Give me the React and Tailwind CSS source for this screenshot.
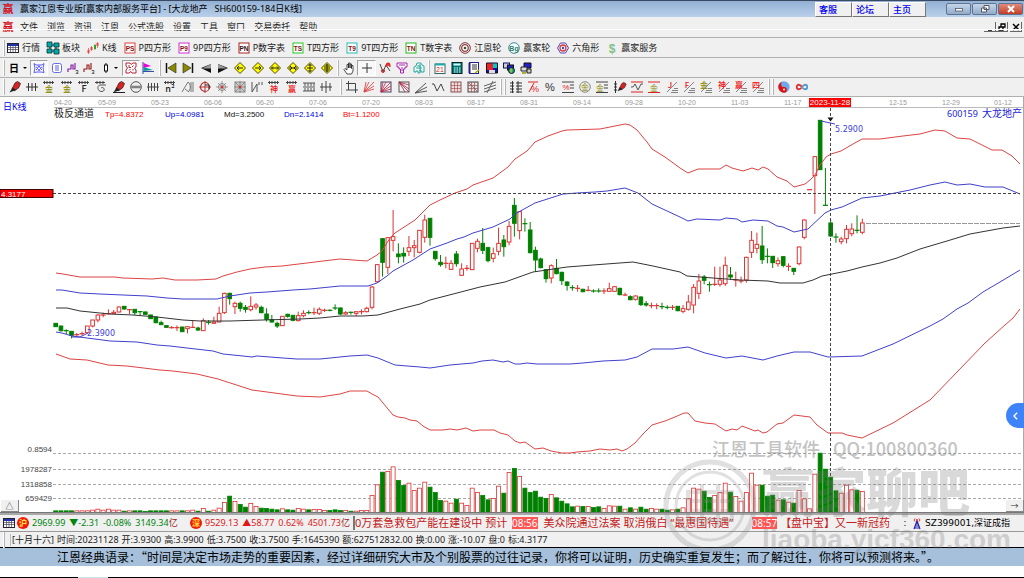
import { Fragment } from 'react';

const CJK = "font-['Noto_Sans','Noto_Sans_CJK_SC',sans-serif]";

const menus = ['文件', '浏览', '资讯', '江恩', '公式选股', '设置', '工具', '窗口', '交易委托', '帮助'];

// ---------- icons, all on a 12x12 grid ----------
const BoxIcon = ({ text, color, ink = '#811' }) => (
    <>
        <rect x="1" y="1" width="10" height="10" fill="#fff" stroke={color} />
        <text x="6" y="8.5" fontSize="6.5" fontWeight="bold" textAnchor="middle" fill={ink} fontFamily="Liberation Sans, sans-serif">{text}</text>
    </>
);

const Diamond = ({ d }) => (
    <>
        <path d="M6 .5 11.5 6 6 11.5 .5 6Z" fill="#ffff00" stroke="#554400" />
        <path d={d} stroke="#222" fill="none" />
    </>
);

const Comb = ({ text, color = '#222', size = 8 }) => (
    <>
        <path d="M0 1.500h11M1.500 0v3M4 0v3M7 0v3M9.500 0v3" stroke="#444" fill="none" />
        <text x="6" y="11" fontSize={size} fontWeight="500" textAnchor="middle" fill={color} fontFamily="Noto Sans CJK SC, sans-serif">{text}</text>
    </>
);

const Slope = ({ text, color }) => (
    <>
        <path d="M1 11 11 1M5 11.500h7M6 9.500h6M8 7.500h4" stroke="#666" fill="none" strokeWidth=".8" />
        <text x="4" y="7" fontSize="8" fontWeight="500" textAnchor="middle" fill={color} fontFamily="Noto Sans CJK SC, sans-serif">{text}</text>
    </>
);

const Pen = () => (
    <>
        <path d="M3 8 6 2 8.500 .5l3 2L9.500 7 5 10Z" fill="#d22" stroke="#222" strokeWidth=".8" />
        <path d="M.5 11.500 3.500 6.500 7 9Z" fill="#222" />
    </>
);

const Rays = ({ color, back }) => (
    <>
        {back && <rect x="1" y="1" width="10" height="10" fill="none" stroke="#446" />}
        <path d="M1 11 3 1M1 11 6 1M1 11 11 1M1 11 11 5M1 11 11 8" stroke={color} fill="none" strokeWidth=".8" />
    </>
);

const icons = {
    sheet: <><rect x=".5" y="1.5" width="11" height="9" fill="#fff" stroke="#223" /><path d="M1 3h10" stroke="#2233aa" strokeWidth="2" /><path d="M1 5.5h10M1 7.5h10M3.5 4v6M6 4v6M8.500 4v6" stroke="#445" strokeWidth=".7" /></>,
    blocks: <><path d="M3 3h6v6H3Z" fill="none" stroke="#111" /><path d="M0 0h5v5H0ZM7 1h5v4H7ZM0 7h5v4H0ZM7 7h5v5H7Z" fill="#0aa" stroke="#033" strokeWidth=".8" /></>,
    kline: <><path d="M1.500 6v6M4.500 4v5M8 2v6M10.500 0v6" stroke="#c33" strokeWidth=".6" /><path d="M.5 8h2v3h-2ZM3.500 5h2v3h-2Z" fill="#e44" /><path d="M7 3h2v4H7Z" fill="#2a2" /><path d="M9.500 1h2v3h-2Z" fill="#e44" /></>,
    ps: <BoxIcon text="PS" color="#d44" />,
    p9: <BoxIcon text="P9" color="#c3c" />,
    pn: <BoxIcon text="PN" color="#a22" ink="#311" />,
    ts: <BoxIcon text="TS" color="#2c2" />,
    t9: <BoxIcon text="T9" color="#2bb" />,
    tn: <BoxIcon text="TN" color="#2b2" />,
    wheel: <><circle cx="6" cy="6" r="5.300" fill="#fff" stroke="#733" /><circle cx="6" cy="6" r="3.300" fill="none" stroke="#944" strokeWidth="1.300" /><circle cx="6" cy="6" r="1.300" fill="#353" /></>,
    big: <><circle cx="6" cy="6" r="5.300" fill="#eff" stroke="#489" /><text x="6" y="8.500" fontSize="7" fontWeight="bold" textAnchor="middle" fill="#387a6a" fontFamily="Liberation Sans, sans-serif">Bg</text></>,
    hex: <><path d="M3.500 1h5L11.500 6l-3 5h-5L.5 6Z" fill="#fff" stroke="#44b" /><circle cx="6" cy="6" r="3" fill="none" stroke="#d33" strokeWidth="1.300" /><circle cx="6" cy="6" r="1.200" fill="#44b" /></>,
    dollar: <text x="6" y="10.500" fontSize="12" fontWeight="bold" textAnchor="middle" fill="#7fc08a" fontFamily="Liberation Sans, sans-serif">$</text>,
    web: <><path d="M1 1.500 3 3h6l2-1.500L10 6l1 4.500L8 10H4l-3 .5L2 6Z" fill="#fff" stroke="#33e" strokeWidth=".8" /><path d="M3 5l2 1-2 2M9 5 7 6l2 2M5 3.500l1 2 1-2M5 9l1-2 1 2" stroke="#33e" fill="none" strokeWidth=".8" /></>,
    book: <><rect x="1.500" y="1.500" width="9" height="9" rx="2" fill="#fff" stroke="#66e" /><path d="M4 4h4M4 6h4M4 8h4" stroke="#33e" strokeWidth=".8" /></>,
    stepA: <><path d="M1 10V7h3V3h2v4h2V1" stroke="#82a" fill="none" strokeWidth="1.200" /><text x="10" y="11.500" fontSize="6" textAnchor="middle" fontFamily="Liberation Sans, sans-serif">3</text></>,
    stepB: <><path d="M1 10V7h3V3h2v4h2V1" stroke="#922" fill="none" strokeWidth="1.200" /><text x="10" y="11.500" fontSize="6" textAnchor="middle" fontFamily="Liberation Sans, sans-serif">3</text></>,
    bar: <><path d="M6 1v10" stroke="#111" /><rect x="4.500" y="3" width="3" height="6" fill="#fff" stroke="#111" /></>,
    maze: <><path d="M1 1h4l1 1.500L8 1h3v4L9.500 6 11 8v3H7L6 9.500 4 11H1V8l1.500-2L1 4Z" fill="#fff" stroke="#a12" strokeWidth=".9" /><path d="M4 3v2.500h2M8.500 3.500 7 5M4 8.500 5.500 7M8 8.500V7" stroke="#a12" fill="none" strokeWidth=".9" /></>,
    flag: <><path d="M1 0v12M1 9.500h11" stroke="#44a" /><path d="M1.500 1 9 4 1.500 6Z" fill="#e0d" /><path d="M1.500 5 11 8 1.500 9Z" fill="#0a9a9a" /></>,
    first: <><path d="M1.500 1v10" stroke="#111" strokeWidth="1.500" /><path d="M11 1v10L3 6Z" fill="#8a8a00" stroke="#222" strokeWidth=".6" /></>,
    last: <><path d="M10.500 1v10" stroke="#111" strokeWidth="1.500" /><path d="M1 1v10L9 6Z" fill="#8a8a00" stroke="#222" strokeWidth=".6" /></>,
    prev: <><path d="M11 2v9L1 6Z" fill="#111" /><path d="M11 2v4.500H2Z" fill="#999" /></>,
    next: <><path d="M1 2v9L11 6Z" fill="#111" /><path d="M1 2v4.500h9Z" fill="#999" /></>,
    d1: <Diamond d="M3 6h6M5 4 3 6l2 2" />,
    d2: <Diamond d="M3 6h6M7 4l2 2-2 2" />,
    d3: <Diamond d="M2.500 6h7M4 4.500 2.500 6 4 7.500M8 4.500 9.500 6 8 7.500" />,
    d4: <Diamond d="M2 6h8M3 4l2 2-2 2M9 4 7 6l2 2" />,
    d5: <Diamond d="M6 2v8M3 6h6M4.500 4 6 2.500 7.500 4M4.500 8 6 9.500 7.500 8" />,
    d6: <Diamond d="M6 2v8M3 5h6M3 7h6M4.500 4 6 2.500 7.500 4M4.500 8 6 9.500 7.500 8" />,
    hand: <path d="M4 12 1 7.500l1-1L4 8V2.500h1.500V6 1h1.500v5V2h1.500v4.500V3.500H10V9l-1.500 3Z" fill="#fff" stroke="#222" strokeWidth=".8" />,
    cross: <path d="M6 1v10M1 6h10" stroke="#333" />,
    wave: <><path d="M1 2 4 10 7 3l4 6" stroke="#444" fill="none" /><circle cx="4" cy="9" r="1.500" fill="none" stroke="#d22" /><path d="M7 5c0-5 4-5 4 0M7 3h4" stroke="#d22" fill="none" strokeWidth="1.300" /></>,
    tee: <path d="M1 1h10v4H9v2H7.500v4h-3V7H3V5H1ZM3 3h6M6 5v4" fill="#fff" stroke="#a2a" />,
    tee2: <path d="M4 1h4l1 2 2 1v6H8V8H7v3H5V9H3v1H1V5l2-1ZM4 4h4M3 6h6M7 2v7" fill="#efe" stroke="#1a9a9a" strokeWidth=".9" />,
    cal: <><rect x="1" y="2" width="10" height="9.500" fill="#fff" stroke="#366" /><path d="M1 2.500h10" stroke="#2aa" strokeWidth="2" /><text x="6" y="10" fontSize="7" textAnchor="middle" fill="#d22" fontFamily="Liberation Sans, sans-serif">21</text></>,
    calc: <><rect x="1" y=".5" width="10" height="11" fill="#077" stroke="#022" /><path d="M2.500 2.500h7" stroke="#cff" strokeWidth="2" /><path d="M3 6h1.500M5.500 6H7M8 6h1.500M3 8h1.500M5.500 8H7M8 8h1.500M3 10h1.500M5.500 10H7M8 10h1.500" stroke="#eff" /></>,
    note: <><rect x="1.500" y=".5" width="9" height="11" fill="#fff" stroke="#228" /><path d="M1.500 1v10" stroke="#228" strokeWidth="2" /><path d="M4 3h5M4 5h5M4 7h5" stroke="#333" /><path d="m7 11 4-3" stroke="#aa0" strokeWidth="1.500" /></>,
    disk: <><path d="M.5 1h11v10H.5Z" fill="#11a" stroke="#111" /><path d="M1 1.500h6V8H1Z" fill="#e22" /><path d="M7 1.500h4V6H7Z" fill="#0cc" /><path d="M3 8h6v3H3Z" fill="#ddd" /></>,
    net: <><rect x=".5" y="1" width="6" height="5" fill="#ccd" stroke="#116" /><rect x="4.500" y="3" width="6" height="5" fill="#22c" stroke="#111" /><circle cx="8.500" cy="8.500" r="3" fill="#2a6" stroke="#113" /><path d="M8 6.500v4" stroke="#dd4" /></>,
    pcs: <><path d="M4 1h7v5H4Z" fill="#22c" stroke="#111" /><path d="M1 5h6v4H1Z" fill="#ddd" stroke="#222" /><path d="M7 7h4v4H7Z" fill="#ccc" stroke="#222" /><path d="M2 11h4" stroke="#990" strokeWidth="1.500" /></>,
    pen: <Pen />,
    ticks: <path d="M0 6h12M2.500 2v8M6 2v8M9.500 2v8" stroke="#333" />,
    gold: <Comb text="金" color="#8a8a00" />,
    f: <Comb text="F" size={9} />,
    spiral: <><path d="M0 1.500h10M2 0v3M5 0v3M8 0v3" stroke="#444" /><path d="M11 4H5C1 5 3 11 7 10.500 11 10 9 5 6 7" stroke="#555" fill="none" /></>,
    penLine: <><Pen /><path d="M0 11.500h12" stroke="#222" /></>,
    ring: <><circle cx="6" cy="6" r="5.300" fill="none" stroke="#555" /><path d="M1 6h10M3 4.500v3M5 4.500v3M7 4.500v3M9 4.500v3" stroke="#444" strokeWidth=".8" /></>,
    ticks4: <path d="M0 6h12M1.500 2v8M4.500 2v8M7.500 2v8M10.500 2v8" stroke="#444" />,
    n2: <Comb text="n²" size={9} />,
    fan: <path d="M0 11 6 1c3 2 3 8 0 10M3 8l4 3M9 1v10M11 1v10" stroke="#777" fill="none" />,
    target: <><circle cx="6" cy="6" r="4.500" fill="none" stroke="#a33" strokeWidth="1.200" /><path d="M6 0v12M0 6h12" stroke="#b33" /><path d="M6 4h4v4" stroke="#333" fill="none" /></>,
    star: <><path d="M6 0v12M0 6h12M2 2l8 8M10 2l-8 8" stroke="#888" strokeWidth=".8" /><circle cx="6" cy="6" r="3.500" fill="none" stroke="#888" /><circle cx="6" cy="6" r="1.500" fill="#c33" /></>,
    starBox: <><rect x="1" y="1" width="10" height="10" fill="#ccc" stroke="#888" /><path d="M6 0v12M0 6h12M1 1l10 10M11 1 1 11" stroke="#777" strokeWidth=".7" /><circle cx="6" cy="6" r="1.500" fill="#c33" /></>,
    slashN: <path d="M1 1v10M1 11 6 3v8M8 1v3M11 1v3" stroke="#555" fill="none" />,
    shen: <Comb text="神" color="#e11" />,
    ying: <Comb text="赢" color="#e11" />,
    rows: <path d="M0 2h12M0 10h12M2 2v3M5 2v3M8 2v3M11 2v3M2 7v3M5 7v3M8 7v3M11 7v3M0 6h12" stroke="#444" strokeWidth=".9" />,
    split: <path d="M0 6h12M2 2v8M6 0v12M10 2v8" stroke="#333" strokeWidth=".9" />,
    frame: <path d="M2.500 0v9H12M0 2.500h9.500V12M2.500 9H0" stroke="#444" fill="none" />,
    raysR: <Rays color="#d33" />,
    raysBox: <Rays color="#b24" back />,
    raysDown: <><rect x="1" y="1" width="10" height="10" fill="none" stroke="#555" /><path d="M1 1l10 3M1 1l10 7M1 1l10 10M1 1l6 10" stroke="#a24" strokeWidth=".8" /></>,
    fanK: <path d="M0 12 11 2M0 12 12 6M0 12l12-2" stroke="#555" />,
    zig: <path d="M0 3h2l3 7 4-7 3 7" stroke="#444" fill="none" />,
    grid: <><rect x="1" y="1" width="10" height="10" fill="#edd" stroke="#855" /><path d="M1 4.500h10M1 7.500h10M4.500 1v10M7.500 1v10" stroke="#a55" strokeWidth=".7" /></>,
    gridK: <><rect x="1" y="1" width="10" height="10" fill="#edd" stroke="#444" /><path d="M1 4.500h10M1 7.500h10M4.500 1v10M7.500 1v10M1 1l10 10" stroke="#855" strokeWidth=".7" /></>,
    para: <path d="M0 5 12 1M0 8l12-4M0 11l12-4M3 12 9 0" stroke="#555" strokeWidth=".9" />,
    ladder: <path d="M2.500 0v12M8 0v12M0 2h4M0 5h4M0 8h4M0 11h4M6 2h6M6 5h6M6 8h6M6 11h6" stroke="#333" />,
    pctR: <><path d="M1 1h10M2 11 7 2" stroke="#d22" /><text x="8" y="11" fontSize="9" textAnchor="middle" fill="#d22" fontFamily="Liberation Sans, sans-serif">%</text></>,
    pct: <text x="6" y="10" fontSize="11" textAnchor="middle" fill="#333" fontFamily="Liberation Sans, sans-serif">%</text>,
    pctL: <><path d="M0 1h12M8 4h4M8 7h4M0 11.500h12" stroke="#444" /><text x="4" y="9" fontSize="8" textAnchor="middle" fill="#d22" fontFamily="Liberation Sans, sans-serif">%</text></>,
    goldO: <><circle cx="6" cy="6" r="5.300" fill="#eee" stroke="#888" /><text x="6" y="9" fontSize="8" textAnchor="middle" fill="#8a8a00" fontFamily="Noto Sans CJK SC, sans-serif">金</text></>,
    goldL: <><path d="M0 1h12M8 4h4M8 7h4M0 11.500h12" stroke="#444" /><text x="4" y="10" fontSize="8" textAnchor="middle" fill="#8a8a00" fontFamily="Noto Sans CJK SC, sans-serif">金</text></>,
    penV: <><path d="M1.500 0v12M0 3h3M0 6h3M0 9h3" stroke="#333" /><g transform="translate(3 1) scale(.8)"><Pen /></g></>,
    chan: <><path d="M0 1h12M0 11h12" stroke="#d22" /><path d="M0 6h2l2-3 3 6 3-6h2" stroke="#555" fill="none" /></>,
    goldR: <><path d="M0 1h12M0 11.500h12" stroke="#d22" /><text x="6" y="9.500" fontSize="8" textAnchor="middle" fill="#8a8a00" fontFamily="Noto Sans CJK SC, sans-serif">金</text></>,
    sJ: <Slope text="J" color="#e11" />,
    sF: <Slope text="F" color="#e11" />,
    sG: <Slope text="金" color="#8a8a00" />,
    sS: <Slope text="神" color="#e11" />,
    sY: <Slope text="赢" color="#e11" />,
    s4: <Slope text="四" color="#e11" />,
    taiji: <><circle cx="6" cy="6" r="5.700" fill="#6fa8ea" /><path d="M6 .3A5.700 5.700 0 0 0 6 11.700 2.850 2.850 0 0 0 6 6 2.850 2.850 0 0 1 6 .3" fill="#d11" /><circle cx="6" cy="8.500" r="1" fill="#fff" /></>,
    loop: <><path d="M6 6C4 3 .8 3 .8 6S4 9 6 6" stroke="#d33" fill="none" strokeWidth="1.800" /><path d="M6 6c2-3 5.200-3 5.200 0S8 9 6 6" stroke="#59c" fill="none" strokeWidth="1.800" /></>,
    tower: <><path d="M6 4 3 12M6 4l3 8M4 9h4M3 11h6M5 7h2" stroke="#22a" fill="none" strokeWidth="1.200" /><path d="M4 1.500c-1 1-1 2 0 3M8 1.500c1 1 1 2 0 3" stroke="#d22" fill="none" /><circle cx="6" cy="3" r="1" fill="#d22" /></>,
};

const Icon = ({ name, className = 'size-3' }) => (
    <svg viewBox="0 0 12 12" className={`${className} shrink-0 overflow-visible`} aria-hidden="true">{icons[name]}</svg>
);

const shortcuts = [
    ['sheet', '行情'], ['blocks', '板块'], ['kline', 'K线'], ['ps', 'P四方形'], ['p9', '9P四方形'],
    ['pn', 'P数字表'], ['ts', 'T四方形'], ['t9', '9T四方形'], ['tn', 'T数字表'], ['wheel', '江恩轮'],
    ['big', '赢家轮'], ['hex', '六角形'], ['dollar', '赢家服务'],
];

const drawA = ['pen', 'ticks', 'gold', 'gold', 'f', 'spiral', 'penLine', 'ring', 'ticks4', 'n2', 'fan', 'target', 'star', 'starBox', 'slashN', 'shen', 'ying', 'rows', 'split'];
const drawB = ['frame', 'raysR', 'raysBox', 'raysDown', 'fanK', 'zig', 'grid', 'gridK', 'para'];
const drawC = ['ladder', 'pctR', 'pct', 'pctL', 'goldO', 'goldL', 'penV', 'chan', 'goldR', 'sJ', 'sF', 'sG', 'sS', 'sY', 's4'];

// ---------- chart data ----------
// [colour, high, body top, body bottom, low, volume], in thirds of a unit from each block's base
const blocks = [
    {
        base: 540,
        bars: [
            ['g', 430, 430, 440, 440, 5], ['g', 438, 438, 452, 455, 5], ['g', 448, 452, 452, 462, 5], ['g', 454, 454, 466, 475, 5],
            ['r', 459, 464, 464, 470, 5], ['r', 455, 461, 461, 467, 5], ['r', 438, 438, 458, 460, 5], ['r', 420, 420, 438, 442, 7],
            ['r', 403, 405, 420, 427, 10], ['r', 398, 405, 405, 412, 7], ['r', 388, 401, 401, 404, 10], ['r', 390, 397, 401, 402, 7],
            ['r', 379, 381, 396, 397, 7], ['g', 379, 379, 387, 389, 4], ['r', 388, 389, 389, 402, 5], ['g', 387, 388, 398, 405, 5],
            ['g', 393, 395, 395, 408, 5], ['g', 394, 396, 403, 404, 3], ['g', 404, 405, 416, 417, 5], ['g', 410, 411, 428, 430, 5],
            ['g', 422, 428, 434, 435, 5], ['g', 435, 437, 442, 444, 5], ['r', 438, 443, 443, 446, 5], ['r', 436, 443, 443, 453, 5],
            ['g', 441, 441, 455, 456, 5], ['r', 438, 440, 446, 460, 5], ['r', 422, 442, 442, 444, 7], ['g', 440, 444, 450, 453, 4],
            ['r', 415, 422, 452, 452, 12], ['g', 420, 427, 427, 434, 4], ['r', 410, 426, 430, 432, 7], ['r', 380, 400, 426, 427, 13],
            ['r', 338, 340, 398, 402, 30], ['g', 338, 340, 356, 374, 49], ['r', 365, 370, 380, 402, 33], ['g', 365, 370, 385, 395, 24],
            ['g', 375, 382, 388, 398, 16], ['r', 349, 379, 389, 394, 27], ['r', 369, 375, 381, 389, 18], ['g', 377, 382, 398, 400, 13],
            ['g', 385, 402, 418, 425, 12], ['g', 405, 419, 426, 428, 10], ['g', 425, 430, 438, 444, 8], ['r', 408, 409, 437, 438, 11],
            ['g', 401, 403, 409, 413, 8], ['g', 405, 406, 421, 424, 7], ['r', 395, 407, 422, 424, 12], ['r', 391, 400, 407, 412, 10],
            ['g', 391, 398, 398, 403, 8], ['r', 383, 398, 398, 405, 9], ['r', 382, 388, 400, 405, 9], ['r', 386, 391, 391, 396, 6],
            ['g', 388, 391, 391, 394, 6], ['g', 373, 384, 384, 390, 8], ['g', 382, 384, 402, 405, 6],
        ],
    },
    {
        base: 360,
        bars: [
            ['r', 573, 578, 582, 584, 6], ['g', 575, 577, 577, 584, 4], ['r', 574, 575, 580, 588, 4], ['r', 568, 575, 575, 583, 6],
            ['r', 560, 565, 575, 577, 6], ['r', 498, 501, 562, 568, 51], ['r', 432, 434, 485, 488, 83], ['g', 354, 356, 427, 470, 121],
            ['r', 351, 353, 442, 462, 123], ['r', 270, 350, 361, 394, 137], ['g', 370, 402, 410, 430, 96], ['g', 382, 400, 408, 428, 81],
            ['r', 348, 383, 394, 408, 88], ['r', 360, 377, 383, 412, 66], ['r', 330, 331, 397, 400, 73], ['r', 284, 300, 352, 368, 91],
            ['g', 294, 295, 352, 377, 76], ['g', 393, 394, 416, 422, 60], ['g', 405, 427, 434, 440, 36], ['r', 410, 430, 430, 445, 34],
            ['r', 420, 430, 448, 450, 28], ['g', 393, 402, 431, 440, 40], ['r', 430, 447, 466, 468, 28], ['r', 435, 445, 445, 452, 21],
            ['r', 369, 370, 449, 450, 73], ['r', 356, 364, 385, 397, 60], ['g', 324, 370, 391, 402, 51], ['g', 380, 383, 422, 427, 38],
            ['r', 383, 401, 415, 427, 42], ['r', 323, 370, 394, 406, 79], ['g', 345, 360, 380, 410, 58], ['r', 303, 319, 366, 376, 120],
            ['g', 234, 256, 310, 350, 132], ['r', 273, 275, 332, 358, 108], ['g', 295, 311, 311, 335, 73], ['g', 306, 330, 398, 400, 60],
            ['g', 380, 391, 420, 456, 64], ['g', 413, 417, 443, 445, 46], ['g', 448, 449, 476, 488, 42], ['r', 433, 437, 474, 490, 54],
            ['g', 417, 445, 461, 463, 44], ['g', 455, 457, 482, 495, 34], ['g', 484, 486, 496, 512, 26], ['g', 495, 503, 503, 512, 17],
            ['r', 495, 505, 505, 515, 19], ['g', 506, 508, 515, 517, 18], ['r', 498, 511, 511, 514, 18], ['g', 508, 513, 513, 518, 15],
            ['g', 505, 513, 513, 518, 17], ['r', 505, 513, 513, 522, 12], ['r', 488, 506, 514, 516, 20], ['r', 498, 500, 514, 516, 19],
            ['g', 503, 505, 524, 526, 19], ['r', 518, 525, 525, 528, 10], ['g', 526, 530, 539, 541, 14], ['r', 526, 528, 538, 542, 10],
            ['g', 529, 531, 554, 558, 16], ['g', 543, 551, 555, 560, 10], ['r', 548, 557, 557, 565, 12], ['r', 550, 557, 557, 568, 10],
            ['g', 548, 560, 560, 568, 10], ['g', 556, 562, 562, 568, 7], ['r', 555, 562, 562, 570, 8], ['g', 558, 559, 572, 574, 10],
        ],
    },
    {
        base: 300,
        bars: [
            ['r', 615, 626, 634, 640, 14], ['r', 585, 606, 628, 632, 41], ['r', 552, 562, 615, 640, 73], ['r', 522, 543, 580, 597, 70],
            ['g', 525, 531, 541, 553, 64], ['g', 545, 554, 554, 575, 45], ['r', 500, 553, 553, 558, 51], ['r', 500, 540, 553, 560, 60],
            ['r', 470, 496, 551, 558, 88], ['g', 501, 525, 531, 540, 61], ['r', 515, 540, 540, 560, 48], ['r', 530, 543, 543, 550, 34],
            ['r', 470, 472, 540, 548, 60], ['r', 393, 421, 457, 474, 118], ['r', 398, 433, 445, 460, 82], ['g', 378, 438, 479, 492, 82],
            ['g', 445, 469, 469, 490, 49], ['g', 468, 469, 488, 504, 52], ['r', 472, 482, 491, 500, 37], ['g', 468, 470, 496, 502, 38],
            ['r', 490, 499, 499, 513, 31], ['g', 504, 505, 514, 525, 28], ['r', 440, 441, 491, 496, 66], ['r', 358, 360, 412, 418, 41],
            ['r', 269, 269, 269, 269, 11], ['r', 168, 170, 227, 342, 115], ['g', 60, 61, 209, 210, 178], ['g', 204, 316, 316, 318, 130],
            ['g', 358, 369, 408, 410, 106], ['g', 400, 411, 411, 428, 65], ['r', 410, 417, 425, 433, 58], ['r', 375, 388, 416, 430, 82],
            ['r', 370, 387, 401, 409, 68], ['g', 346, 391, 391, 400, 67], ['r', 356, 369, 397, 403, 63],
        ],
    },
];

const bars = blocks.flatMap(({ base, bars }) =>
    bars.map(([color, high, top, bottom, low, volume]) => ({
        color: color === 'g' ? '#008000' : '#dc3232',
        up: color === 'r',
        high: (base + high) / 3,
        top: (base + top) / 3,
        bottom: (base + bottom) / 3,
        low: (base + low) / 3,
        volume: volume / 3,
    }))
);
const barX = (i) => 55.7 + i * 5.272;

const curves = [
    { color: '#dd4444', points: '56,273 63,274 80,277 115,277 123,278 152,279 163,278 175,280 197,280 216,279 223,276 237,272 250,269 265,267 282,266 307,263 323,261 340,259 353,260 367,261 377,255 382,251 390,238 395,233 415,220 430,205 440,200 455,193 467,189 473,185 493,178 508,167 515,159 527,151 535,142 548,136 562,131 567,130 600,129 625,124 630,125 637,130 647,142 652,149 665,157 680,168 688,173 698,169 720,169 726,165 732,168 743,171 752,168 758,170 763,167 768,169 777,177 787,181 794,187 805,184 810,180 815,175 820,165 826,157 831,154 841,151 853,144 862,139 880,139 903,136 920,134 935,130 945,131 957,138 970,139 982,145 992,150 1002,150 1012,156 1020,164' },
    { color: '#4040cc', points: '56,290 62,290 80,293 100,294 123,295 147,296 167,298 183,299 217,299 230,296 250,293 267,292 293,290 310,289 340,286 368,286 377,283 387,276 393,271 413,260 430,249 447,243 457,239 464,237 473,233 483,230 493,227 510,219 515,214 535,203 563,194 577,193 595,192 607,191 625,188 638,193 652,204 680,217 688,221 697,219 720,220 726,218 737,219 742,222 753,220 768,221 777,226 783,227 794,232 808,229 825,213 831,210 842,207 862,198 880,196 910,190 930,185 945,182 957,185 970,184 985,187 1003,187 1020,194' },
    { color: '#333333', points: '56,308 67,308 80,311 110,314 133,315 157,317 183,320 200,321 230,321 263,320 300,319 320,318 340,316 363,316 378,315 400,309 420,304 430,300 457,293 480,287 505,282 533,272 567,267 593,265 633,262 653,266 680,272 687,276 713,278 740,280 768,281 780,283 803,283 813,280 822,276 847,271 862,267 880,263 897,258 920,249 947,241 970,234 1003,228 1020,226' },
    { color: '#4040cc', points: '56,332 62,333 72,336 87,338 95,339 110,341 137,342 157,345 170,346 187,348 213,351 223,354 243,356 252,357 257,356 283,358 297,359 320,359 330,358 340,357 350,356 367,355 378,358 395,365 420,367 430,368 450,365 473,363 482,361 493,360 503,362 508,361 515,364 520,364 527,363 537,364 570,364 583,363 603,361 625,360 637,357 652,349 673,349 688,347 705,353 726,358 742,356 763,360 777,356 794,352 810,352 828,357 862,356 893,344 930,326 943,319 957,309 968,303 983,292 1000,282 1020,270' },
    { color: '#dd4444', points: '56,354 70,359 87,360 108,365 127,366 160,370 173,371 197,374 218,379 252,390 297,396 320,397 340,394 350,391 367,391 372,394 378,397 383,403 393,415 398,417 405,418 410,420 417,421 423,426 430,430 443,430 450,429 457,430 466,428 473,431 480,430 494,430 500,433 508,435 515,441 520,443 525,442 535,449 543,448 551,451 562,453 570,453 577,452 590,451 600,449 610,450 617,449 622,451 627,449 635,443 643,434 652,425 665,421 675,417 684,413 688,413 695,421 705,423 715,424 726,431 732,429 737,430 742,426 755,431 758,430 763,433 767,432 777,424 783,423 794,415 810,417 817,425 828,433 842,433 847,435 862,438 893,423 930,400 958,371 985,343 1005,325 1013,318 1020,309' },
];

const dates = [
    ['04-20', 54], ['05-09', 98], ['05-23', 151], ['06-06', 204], ['06-20', 256], ['07-06', 309], ['07-20', 362],
    ['08-03', 415], ['08-17', 467], ['08-31', 520], ['09-14', 573], ['09-28', 625], ['10-20', 678], ['11-03', 731],
    ['11-17', 784], ['12-15', 889], ['12-29', 942], ['01-12', 994],
];

const scale = [
    ['0.8594', 452, 453.5], ['1978287', 472, 469.5], ['1318858', 487, 484.5], ['659429', 501, 498.5],
];

const readouts = [
    ['Tp=4.8372', 105, '#ff0000'], ['Up=4.0981', 165, '#0000dd'], ['Md=3.2500', 224, '#111111'],
    ['Dn=2.1414', 284, '#0000dd'], ['Bt=1.1200', 343, '#ff0000'],
];

function Chart() {
    return (
        <svg viewBox="0 97 1024 415" className="block w-full bg-white" role="img" aria-label="大龙地产 日K线">
            <path d="M54 107.500H1024" stroke="#bbb" />
            <path d="M1023.500 97V512" stroke="#aaa" />
            <g fontFamily="Liberation Sans, sans-serif" fontSize="7" fill="#999">
                {dates.map(([d, x]) => <text key={d} x={x} y="105">{d}</text>)}
            </g>

            <g fontFamily="Liberation Sans, sans-serif" fontSize="8" fill="#444" textAnchor="end">
                {scale.map(([label, y, line]) => (
                    <Fragment key={label}>
                        <text x="52" y={y}>{label}</text>
                        <path d={`M53 ${line}H1023`} stroke="#aaa" strokeDasharray="3 2" />
                    </Fragment>
                ))}
            </g>

            {bars.map((b, i) => {
                const x = barX(i);
                return (
                    <g key={i} stroke={b.color}>
                        <rect x={x - 2} y={512.5 - b.volume} width="4" height={b.volume} fill={b.up ? '#fff' : b.color} strokeWidth=".8" />
                        <path d={`M${x} ${b.high}V${b.top}M${x} ${b.bottom}V${b.low}`} />
                        {b.top === b.bottom
                            ? <path d={`M${x - 2.5} ${b.top}h5`} strokeWidth="1.200" />
                            : <rect x={x - 1.8} y={b.top} width="3.600" height={b.bottom - b.top} fill={b.up ? '#fff' : b.color} />}
                    </g>
                );
            })}

            {curves.map((c, i) => <polyline key={i} points={c.points} fill="none" stroke={c.color} />)}

            <path d="M866 223.500H1020" stroke="#999" strokeDasharray="5 1" />
            <path d="M53 193.500H1020" stroke="#444" strokeDasharray="3 2" />
            <path d="M830.500 108V512" stroke="#444" strokeDasharray="3 2" />
            <path d="M827.500 117.500h6l-3 4Z" fill="#111" />
            <path d="M821 121l14 3M72 337h8l8-4" stroke="#44c" fill="none" />
            <g fontFamily="DejaVu Sans, sans-serif" fontSize="8" fill="#4040dd">
                <text x="835" y="132">5.2900</text>
                <text x="87" y="336">2.3900</text>
            </g>

            <rect x="809" y="98" width="42" height="9" fill="#f00" />
            <text x="830" y="105" fontSize="8" textAnchor="middle" fill="#fff" fontFamily="Liberation Sans, sans-serif">2023-11-28</text>
            <rect x="0" y="189.500" width="53" height="8" fill="#f00" stroke="#400" />
            <text x="1" y="197" fontSize="8" fill="#fff" fontFamily="Liberation Sans, sans-serif">4.3177</text>

            <text x="3" y="110" fontSize="9" fill="#0000ee" fontFamily="Noto Sans, Noto Sans CJK SC, sans-serif">日K线</text>
            <text x="54" y="117" fontSize="10" fill="#222" fontFamily="Noto Sans CJK SC, sans-serif">极反通道</text>
            <g fontFamily="Liberation Sans, sans-serif" fontSize="8">
                {readouts.map(([t, x, fill]) => <text key={t} x={x} y="117" fill={fill}>{t}</text>)}
            </g>
            <text x="947" y="117" fontSize="9" fill="#2222dd" fontFamily="Noto Sans, sans-serif">600159</text>
            <text x="1022" y="117" fontSize="10" textAnchor="end" fill="#2222dd" fontFamily="Noto Sans CJK SC, sans-serif">大龙地产</text>
        </svg>
    );
}

// ---------- window frame ----------
const Grip = () => <span className="mx-px h-4 w-[2px] shrink-0 border-l border-white bg-[#b4b4b4]" />;

const ToolButton = ({ name, pressed = false }) => (
    <button
        type="button"
        aria-label={name}
        className={`flex h-4 min-w-0 flex-1 items-center justify-center ${pressed ? 'border border-[#a0a0a0] border-r-white border-b-white bg-[#f8f8f8]' : ''}`}
    >
        <Icon name={name} />
    </button>
);

const Logo = ({ className }) => (
    <svg viewBox="0 0 12 12" className={`${className} shrink-0 overflow-visible`} aria-hidden="true">
        <text x="6" y="10" fontSize="11" fontWeight="bold" textAnchor="middle" fill="#d4101c" fontFamily="Noto Sans CJK SC, sans-serif">赢</text>
    </svg>
);

function TitleBar() {
    const frameButton = 'flex h-3 w-[25px] items-center justify-center rounded-[2px] border border-[#5d7390] text-white';
    return (
        <header className="flex h-[17px] items-center border-t border-[#3b4a63] bg-linear-to-b from-[#93b0d3] to-[#b9d0ea] pl-[2px]">
            <Logo className="mr-[6px] size-3" />
            <h1 className="flex-1 whitespace-pre text-[9px] leading-4 text-black">赢家江恩专业版[赢家内部服务平台] - [大龙地产   SH600159-184日K线]</h1>
            <nav className="mr-5 flex">
                {['客服', '论坛', '主页'].map((t) => (
                    <a key={t} href="#" className="h-[15px] w-[37px] border border-white border-r-[#777] border-b-[#777] bg-[#f0f0f0] pl-[3px] text-[9px] leading-[13px] font-medium text-[#0000ee]">{t}</a>
                ))}
            </nav>
            <div className="flex gap-px pr-px">
                <button type="button" aria-label="最小化" className={`${frameButton} bg-linear-to-b from-[#c5d6ea] to-[#93abc9]`}>
                    <svg viewBox="0 0 12 8" className="h-2 w-3"><rect x="2.500" y="3.500" width="7" height="2.500" fill="#fff" stroke="#556" strokeWidth=".8" /></svg>
                </button>
                <button type="button" aria-label="还原" className={`${frameButton} bg-linear-to-b from-[#c5d6ea] to-[#93abc9]`}>
                    <svg viewBox="0 0 12 8" className="h-2 w-3"><path d="M5 .5h5v4H5ZM2.500 3h5v4h-5Z" fill="#fff" stroke="#556" /></svg>
                </button>
                <button type="button" aria-label="关闭" className={`${frameButton} bg-linear-to-b from-[#e08a7c] to-[#c23a22]`}>
                    <svg viewBox="0 0 12 8" className="h-2 w-3"><path d="m3 1 6 6M9 1 3 7" stroke="#fff" strokeWidth="2" /></svg>
                </button>
            </div>
        </header>
    );
}

function MenuBar() {
    const mdi = 'flex h-[10px] w-3 items-center justify-center border-r border-b border-[#666]';
    return (
        <div className="relative flex h-5 items-center pl-[2px]">
            <Logo className="mr-[6px] size-3" />
            <nav className="flex flex-1 gap-[9px]">
                {menus.map((m) => <button key={m} type="button" className="text-[9px] leading-4 text-[#222]">{m}</button>)}
            </nav>
            <div className="flex pr-[2px]">
                <button type="button" aria-label="最小化窗口" className={mdi}><svg viewBox="0 0 8 8" className="size-2"><path d="M2 7h4" stroke="#000" strokeWidth="1.500" /></svg></button>
                <button type="button" aria-label="还原窗口" className={`${mdi} mr-[2px]`}><svg viewBox="0 0 8 8" className="size-2"><path d="M3 1h4v3H3ZM1 4h4v3H1Z" fill="none" stroke="#000" strokeWidth="1.300" /></svg></button>
                <button type="button" aria-label="关闭窗口" className={mdi}><svg viewBox="0 0 8 8" className="size-2"><path d="m1 1 6 6M7 1 1 7" stroke="#000" strokeWidth="1.500" /></svg></button>
            </div>
            <span className="absolute inset-x-0 top-3 h-px bg-white" />
        </div>
    );
}

function Toolbars() {
    const row = 'flex h-5 items-center border-t border-[#b0b0b0]';
    return (
        <div>
            <div className={`${row} gap-[7px] pl-[2px]`}>
                <span className="-mr-[6px] flex"><Grip /></span>
                {shortcuts.map(([icon, label]) => (
                    <button key={label} type="button" className="flex items-center gap-[3px] text-[9px] leading-4 whitespace-nowrap text-[#222]">
                        <Icon name={icon} />
                        {label}
                    </button>
                ))}
            </div>
            <div className={row}>
                <span className="flex pl-[2px]"><Grip /></span>
                <button type="button" className="flex w-6 items-center justify-center gap-1 text-[10px] leading-4 font-bold text-black">
                    日<svg viewBox="0 0 4 2" className="h-[2px] w-1"><path d="M0 0h4L2 2Z" /></svg>
                </button>
                <div className="flex w-[84px]">
                    <ToolButton name="web" pressed />
                    <ToolButton name="book" />
                    <ToolButton name="stepA" />
                    <ToolButton name="stepB" />
                    <ToolButton name="bar" />
                </div>
                <svg viewBox="0 0 4 2" className="mr-1 h-[2px] w-1"><path d="M0 0h4L2 2Z" /></svg>
                <div className="mr-[2px] flex w-[34px]">
                    <ToolButton name="maze" pressed />
                    <ToolButton name="flag" />
                </div>
                <Grip />
                <div className="flex w-[174px]">
                    {['first', 'last', 'prev', 'next', 'd1', 'd2', 'd3', 'd4', 'd5', 'd6'].map((n) => <ToolButton key={n} name={n} />)}
                </div>
                <Grip />
                <div className="flex w-[87px]">
                    <ToolButton name="hand" />
                    <ToolButton name="cross" pressed />
                    <ToolButton name="wave" />
                    <ToolButton name="tee" />
                    <ToolButton name="tee2" />
                </div>
                <Grip />
                <div className="flex w-[104px]">
                    {['cal', 'calc', 'note', 'disk', 'net', 'pcs'].map((n) => <ToolButton key={n} name={n} />)}
                </div>
            </div>
            <div className={`${row} border-b`}>
                <span className="flex pl-[2px]"><Grip /></span>
                <div className="flex w-[329px]">{drawA.map((n, i) => <ToolButton key={i} name={n} />)}</div>
                <span className="ml-1 flex"><Grip /></span>
                <div className="flex w-[156px]">{drawB.map((n) => <ToolButton key={n} name={n} />)}</div>
                <Grip /><Grip />
                <div className="flex w-[260px]">{drawC.map((n) => <ToolButton key={n} name={n} />)}</div>
                <Grip /><Grip />
                <div className="flex w-9">
                    <ToolButton name="taiji" />
                    <ToolButton name="loop" />
                </div>
            </div>
        </div>
    );
}

const Badge = ({ children }) => (
    <span className="flex size-3 shrink-0 items-center justify-center rounded-full bg-[#f01808] text-[8px] leading-3 font-bold text-[#ffe040]">{children}</span>
);

function Ticker() {
    return (
        <div className="flex h-4 items-center pl-[3px] text-[9px] leading-3 whitespace-pre">
            <Icon name="sheet" />
            <span className="w-[2px]" />
            <Badge>沪</Badge>
            <p className="flex w-[161px] gap-1 pl-[3px] text-[#00850c]">
                <span>2969.99</span><span>▼-2.31</span><span>-0.08%</span><span>3149.34<span className="text-[#922]">亿</span></span>
            </p>
            <Badge>深</Badge>
            <p className="flex w-[151px] gap-1 pl-[3px] text-[#e01818]">
                <span>9529.13</span><span>▲58.77</span><span>0.62%</span><span>4501.73<span className="text-[#922]">亿</span></span>
            </p>
            <div className="flex min-w-0 flex-1 items-center border-l-2 border-[#777] text-[11px] leading-[14px] text-[#c42020]">
                <span className="w-[157px]">0万套急救包产能在建设中 预计</span>
                <time className="mr-[6px] bg-[#f55] text-[10px] leading-3 text-white">08:56</time>
                <span className="w-[208px]">美众院通过法案 取消俄白 “最惠国待遇”</span>
                <time className="mr-[3px] bg-[#f55] text-[10px] leading-3 text-white">08:57</time>
                <span>【盘中宝】又一新冠药</span>
            </div>
            <span className="w-3 text-center">:</span>
            <Icon name="tower" />
            <p className="w-[101px] pl-[2px] font-['DejaVu_Sans','Noto_Sans_CJK_SC',sans-serif] text-black">SZ399001,深证成指</p>
        </div>
    );
}

const status = ['[十月十六]', '时间:20231128', '开:3.9300', '高:3.9900', '低:3.7500', '收:3.7500', '手:1645390', '额:627512832.00', '换:0.00', '涨:-10.07', '盘:0', '标:4.3177'];

function Watermark() {
    return (
        <svg viewBox="660 435 364 122" className="pointer-events-none absolute right-0 bottom-[21px] w-[364px]" aria-hidden="true">
            <g fill="none" stroke="#888" opacity=".25">
                <circle cx="710" cy="506" r="44" strokeWidth="5" />
                <circle cx="710" cy="506" r="34" strokeWidth="3" />
                <path d="M688 492h44v28h-44ZM688 501h44M688 511h44M702 484v44M718 484v44" strokeWidth="4" />
            </g>
            <g fill="#888" opacity=".5" fontSize="18" fontWeight="500" fontFamily="Noto Sans CJK SC, sans-serif">
                <text x="712" y="456">江恩工具软件</text>
                <text x="833" y="456">QQ:100800360</text>
            </g>
            <g fill="#777" opacity=".27">
                <text x="762" y="512" fontSize="52" fontWeight="900" fontFamily="Noto Sans CJK SC, sans-serif">赢家聊吧</text>
                <text x="762" y="549" fontSize="28" fontWeight="bold" fontFamily="Liberation Sans, sans-serif">liaoba.yjcf360.com</text>
            </g>
        </svg>
    );
}

export default function App() {
    return (
        <div className={`${CJK} relative w-full overflow-hidden bg-[#f0f0f0]`} lang="zh-CN">
            <TitleBar />
            <MenuBar />
            <Toolbars />

            <main className="relative">
                <Chart />
                <button type="button" aria-label="展开" className="absolute bottom-0 left-px flex h-3 w-[18px] items-center justify-center border-r border-b border-[#888] bg-[#f0f0f0] text-[8px] leading-none text-[#333]">△</button>
                <button type="button" aria-label="右移" className="absolute right-0 bottom-0 flex h-3 w-[18px] items-center justify-center border-r border-b border-[#888] bg-[#f0f0f0] text-[8px] leading-none text-[#333]">→</button>
                <button type="button" aria-label="侧栏" className="absolute right-0 bottom-[84px] flex h-[25px] w-[18px] items-center justify-center rounded-l-full bg-[#3f83f8]">
                    <svg viewBox="0 0 6 10" className="h-2 w-[5px]"><path d="M5 1 1 5l4 4" fill="none" stroke="#fff" strokeWidth="1.800" /></svg>
                </button>
            </main>

            <div className="h-[3px] border-t border-[#777] bg-[#a8a8a8]" />
            <Ticker />
            <div className="flex h-4 items-center border-t border-[#999] text-[9px] leading-3 whitespace-pre text-[#222]">
                <span className="flex pl-[2px]"><Grip /></span>
                <p className="ml-1 flex flex-1 gap-[3px] border-l border-[#bbb] pl-px">
                    {status.map((s) => <span key={s}>{s}</span>)}
                </p>
            </div>
            <p className="h-[19px] border-t border-black bg-[#a6c0dc] pl-[57px] font-['Noto_Sans_CJK_SC',sans-serif] text-[12px] leading-[18px] whitespace-nowrap text-black [font-variant-east-asian:full-width]">
                江恩经典语录：“时间是决定市场走势的重要因素，经过详细研究大市及个别股票的过往记录，你将可以证明，历史确实重复发生；而了解过往，你将可以预测将来。”。
            </p>
            <div className="h-[11px] bg-white" />
            <div className="flex h-px bg-black pl-[78px]"><span className="w-[30px] bg-[#c8e4f0]" /></div>
            <Watermark />
        </div>
    );
}
